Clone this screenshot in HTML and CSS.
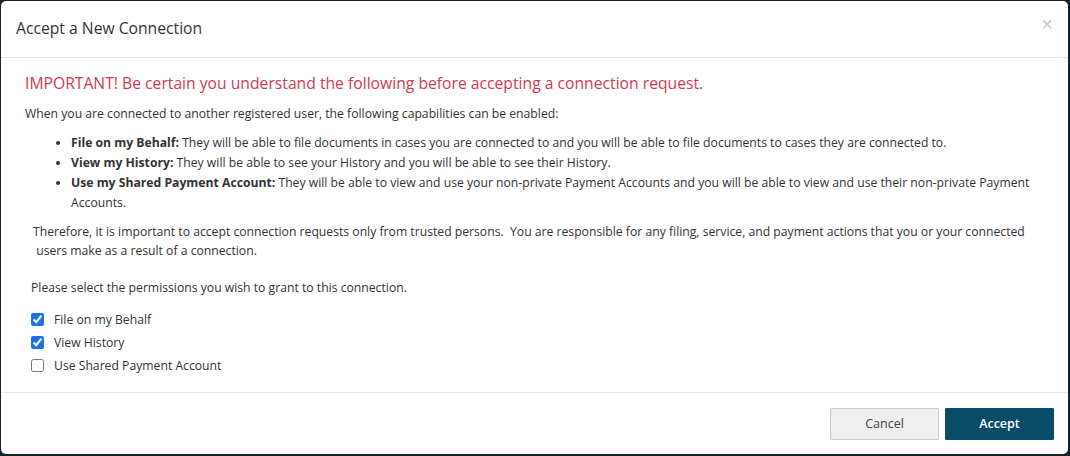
FILE: index.html
```html
<!DOCTYPE html>
<html lang="en">
<head>
    <meta charset="UTF-8">
    <title>Accept a New Connection</title>
    <link rel="stylesheet" href="styles.css">
</head>
<body>
    <div class="modal">
        <div class="modal-header">
            <h4>Accept a New Connection</h4>
            <button class="close" type="button">&times;</button>
        </div>

        <div class="modal-body">
            <h3 class="warning">IMPORTANT! Be certain you understand the following before accepting a connection request.</h3>
            <p>When you are connected to another registered user, the following capabilities can be enabled:</p>
            <ul class="capabilities">
                <li><b>File on my Behalf:</b> They will be able to file documents in cases you are connected to and you will be able to file documents to cases they are connected to.</li>
                <li><b>View my History:</b> They will be able to see your History and you will be able to see their History.</li>
                <li><b>Use my Shared Payment Account:</b> They will be able to view and use your non-private Payment Accounts and you will be able to view and use their non-private Payment Accounts.</li>
            </ul>
            <p class="therefore">Therefore, it is important to accept connection requests only from trusted persons.&nbsp; You are responsible for any filing, service, and payment actions that you or your connected &nbsp;users make as a result of a connection.</p>
            <p class="select">Please select the permissions you wish to grant to this connection.</p>
            <div class="permissions">
                <label><input type="checkbox" checked> File on my Behalf</label>
                <label><input type="checkbox" checked> View History</label>
                <label><input type="checkbox"> Use Shared Payment Account</label>
            </div>
        </div>

        <div class="modal-footer">
            <button class="btn btn-cancel" type="button">Cancel</button>
            <button class="btn btn-accept" type="button">Accept</button>
        </div>
    </div>
</body>
</html>
```

FILE: styles.css
```css
html, body {
    height: 100%;
}

body {
    font-family: "Open Sans", "Noto Sans", sans-serif;
    background-color: #13242e;
    margin: 0;
    padding: 1px 2px 2px 1px;
    box-sizing: border-box;
    color: #333;
}

.modal {
    background-color: #fff;
    border-radius: 5px;
    height: 100%;
    display: flex;
    flex-direction: column;
}

.modal-header {
    display: flex;
    align-items: center;
    justify-content: space-between;
    height: 56px;
    padding: 0 15px;
    border-bottom: 1px solid #e5e5e5;
}

.modal-header h4 {
    margin: 0 0 2px 0;
    font-size: 15.7px;
    font-weight: normal;
    color: #333;
}

.close {
    background: none;
    border: none;
    color: #c8c8c8;
    font-size: 20px;
    padding: 0;
    margin: 0 0 10px 0;
    cursor: pointer;
    font-family: "Liberation Sans", sans-serif;
}

.modal-body {
    flex: 1;
    padding: 16px 24px 0 24px;
    font-size: 12.2px;
    line-height: 19px;
}

.warning {
    color: #d13a4f;
    font-size: 15.7px;
    font-weight: normal;
    margin: 0 0 11px 0;
}

.modal-body p {
    margin: 0;
}

.capabilities {
    margin: 10px 0 9px 0;
    padding-left: 46px;
}

.capabilities li {
    margin: 0;
    line-height: 20px;
}

.therefore {
    padding-left: 8px;
}

.modal-body p.select {
    margin-top: 18px;
    padding-left: 6px;
}

.permissions {
    display: flex;
    flex-direction: column;
    gap: 4px;
    margin-top: 13px;
    padding-left: 6px;
}

.permissions label {
    display: flex;
    align-items: center;
}

.permissions input {
    width: 13px;
    height: 13px;
    margin: 0 10px 0 0;
    accent-color: #1a73e8;
}

.modal-footer {
    display: flex;
    justify-content: flex-end;
    gap: 6px;
    height: 61px;
    padding: 0 14px;
    align-items: center;
    border-top: 1px solid #e5e5e5;
}

.btn {
    width: 109px;
    height: 32px;
    font-family: "Open Sans", "Noto Sans", sans-serif;
    font-size: 12.5px;
    border-radius: 1px;
    cursor: pointer;
}

.btn-cancel {
    background-color: #efefef;
    border: 1px solid #c9c9c9;
    color: #444;
}

.btn-accept {
    background-color: #084c68;
    border: 1px solid #084c68;
    color: #fff;
    font-weight: 600;
}
```
